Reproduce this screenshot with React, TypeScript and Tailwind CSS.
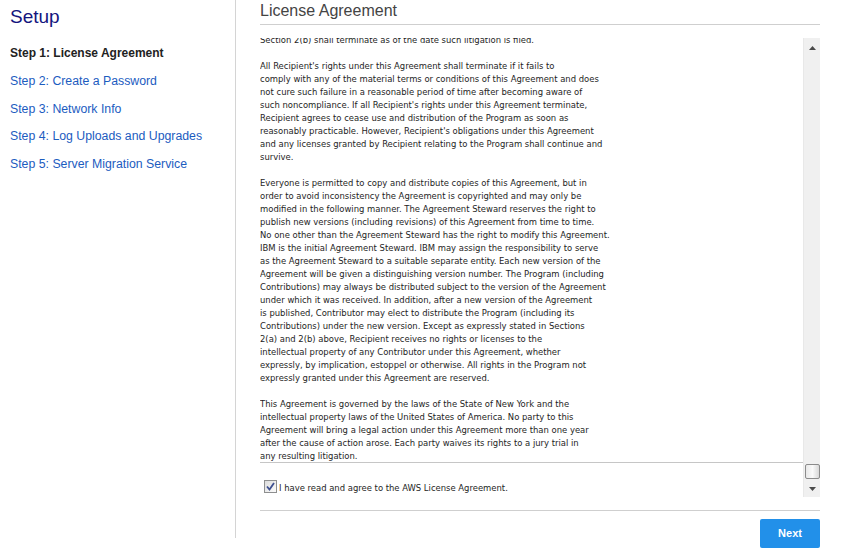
import { useState } from 'react';

const steps = [
  'Step 2: Create a Password',
  'Step 3: Network Info',
  'Step 4: Log Uploads and Upgrades',
  'Step 5: Server Migration Service',
];

const licenseLines = [
  'Section 2(b) shall terminate as of the date such litigation is filed.',
  '',
  "All Recipient's rights under this Agreement shall terminate if it fails to",
  'comply with any of the material terms or conditions of this Agreement and does',
  'not cure such failure in a reasonable period of time after becoming aware of',
  "such noncompliance. If all Recipient's rights under this Agreement terminate,",
  'Recipient agrees to cease use and distribution of the Program as soon as',
  "reasonably practicable. However, Recipient's obligations under this Agreement",
  'and any licenses granted by Recipient relating to the Program shall continue and',
  'survive.',
  '',
  'Everyone is permitted to copy and distribute copies of this Agreement, but in',
  'order to avoid inconsistency the Agreement is copyrighted and may only be',
  'modified in the following manner. The Agreement Steward reserves the right to',
  'publish new versions (including revisions) of this Agreement from time to time.',
  'No one other than the Agreement Steward has the right to modify this Agreement.',
  'IBM is the initial Agreement Steward. IBM may assign the responsibility to serve',
  'as the Agreement Steward to a suitable separate entity. Each new version of the',
  'Agreement will be given a distinguishing version number. The Program (including',
  'Contributions) may always be distributed subject to the version of the Agreement',
  'under which it was received. In addition, after a new version of the Agreement',
  'is published, Contributor may elect to distribute the Program (including its',
  'Contributions) under the new version. Except as expressly stated in Sections',
  '2(a) and 2(b) above, Recipient receives no rights or licenses to the',
  'intellectual property of any Contributor under this Agreement, whether',
  'expressly, by implication, estoppel or otherwise. All rights in the Program not',
  'expressly granted under this Agreement are reserved.',
  '',
  'This Agreement is governed by the laws of the State of New York and the',
  'intellectual property laws of the United States of America. No party to this',
  'Agreement will bring a legal action under this Agreement more than one year',
  'after the cause of action arose. Each party waives its rights to a jury trial in',
  'any resulting litigation.',
];

const bodyFont = '"Liberation Sans Narrow", "DejaVu Sans Condensed", "Open Sans", sans-serif';

export default function App() {
  const [agreed, setAgreed] = useState(true);

  return (
    <div className="flex w-[858px] h-[556px] bg-white overflow-hidden" style={{ fontFamily: '"Liberation Sans", Arial, sans-serif' }}>
      {/* Sidebar */}
      <div className="w-[236px] h-[538px] shrink-0 border-r border-[#d4d4d4] pl-[10px]">
        <h1 className="text-[19px] leading-[22px] pt-[6px] text-[#14147e]">Setup</h1>
        <div className="mt-[12px] flex flex-col">
          <div className="h-[27.75px] leading-[27.75px] text-[12px] font-bold text-[#222]">Step 1: License Agreement</div>
          {steps.map((s) => (
            <a key={s} href="#" className="h-[27.75px] leading-[27.75px] text-[12.3px] text-[#1c5cbf]">
              {s}
            </a>
          ))}
        </div>
      </div>

      {/* Main */}
      <div className="flex-1 pl-[24px] pr-[38px]">
        <div className="h-[25px] border-b border-[#cfcfcf]">
          <h2 className="pt-[1px] text-[16px] leading-[20px] text-[#444]">License Agreement</h2>
        </div>

        <div className="mt-[13px] flex h-[459px]">
          <div className="flex-1 overflow-hidden">
            <div className="-mt-[5px] text-[9.4px] leading-[13px] text-[#1e1e1e]" style={{ fontFamily: bodyFont }}>
              {licenseLines.map((l, i) => (
                <div key={i} className="h-[13px] whitespace-nowrap">
                  {l}
                </div>
              ))}
            </div>
            <div className="border-t border-[#c6c6c6]"></div>
            <label
              className="flex items-center mt-[15px] ml-[4px] text-[9.4px] text-[#1e1e1e] cursor-pointer"
              style={{ fontFamily: bodyFont }}
              onClick={() => setAgreed(!agreed)}
            >
              <span className="w-[13px] h-[13px] border border-[#8e8f8f] bg-gradient-to-br from-[#dcdcdc] to-[#fbfbfb] flex items-center justify-center">
                {agreed && (
                  <svg width="9" height="9" viewBox="0 0 9 9">
                    <path d="M1 4.5 L3.5 7.5 L8 1" fill="none" stroke="#3d4f8f" strokeWidth="1.8" />
                  </svg>
                )}
              </span>
              <span className="ml-[2px] mt-[3px]">I have read and agree to the AWS License Agreement.</span>
            </label>
          </div>

          {/* Scrollbar */}
          <div className="w-[17px] shrink-0 bg-[#f0f0f0] border-l border-[#e8e8e8] flex flex-col items-center">
            <svg className="mt-[8px]" width="7" height="4" viewBox="0 0 7 4">
              <polygon points="3.5,0 7,4 0,4" fill="#4a4a4a" />
            </svg>
            <div className="flex-1"></div>
            <div className="w-[15px] h-[15px] rounded-[2px] border border-[#8b8b8b] bg-gradient-to-r from-[#e8e8e8] via-[#fafafa] to-[#d8d8d8]"></div>
            <svg className="mt-[8px] mb-[6px]" width="7" height="4" viewBox="0 0 7 4">
              <polygon points="0,0 7,0 3.5,4" fill="#4a4a4a" />
            </svg>
          </div>
        </div>

        <div className="mt-[13px] border-t border-[#cfcfcf] flex justify-end pt-[8px]">
          <button className="w-[60px] h-[29px] rounded-[2px] bg-[#2290e9] text-white text-[11px] font-bold">Next</button>
        </div>
      </div>
    </div>
  );
}
